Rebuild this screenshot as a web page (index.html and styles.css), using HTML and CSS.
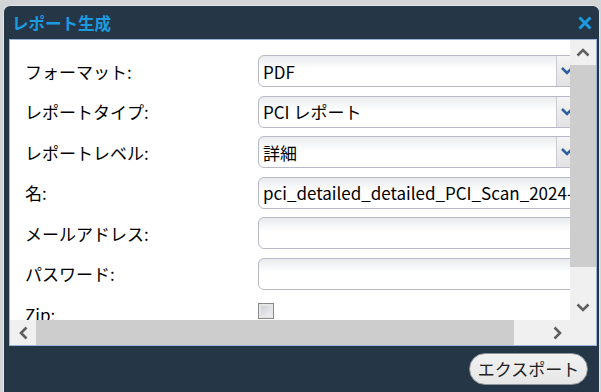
FILE: index.html
```html
<!DOCTYPE html>
<html lang="ja">
<head>
<meta charset="utf-8">
<title>レポート生成</title>
<link rel="stylesheet" href="styles.css">
</head>
<body>
<div class="dialog">
  <div class="titlebar">
    <span class="title">レポート生成</span>
    <svg class="close" width="16" height="16" viewBox="0 0 16 16"><path d="M2.5 2.5 L13.5 13.5 M13.5 2.5 L2.5 13.5" stroke="#1d9be0" stroke-width="3" stroke-linecap="butt"/></svg>
  </div>
  <div class="content">
    <div class="viewport">
      <div class="form">
        <label class="lbl">フォーマット:</label>
        <div class="field select"><span class="val">PDF</span><span class="arrow"><svg width="22" height="12" viewBox="0 0 22 12"><path d="M5 3 L10 8 L15 3" stroke="#2f5f9e" stroke-width="2.6" fill="none"/></svg></span></div>
        <label class="lbl">レポートタイプ:</label>
        <div class="field select"><span class="val">PCI レポート</span><span class="arrow"><svg width="22" height="12" viewBox="0 0 22 12"><path d="M5 3 L10 8 L15 3" stroke="#2f5f9e" stroke-width="2.6" fill="none"/></svg></span></div>
        <label class="lbl">レポートレベル:</label>
        <div class="field select"><span class="val">詳細</span><span class="arrow"><svg width="22" height="12" viewBox="0 0 22 12"><path d="M5 3 L10 8 L15 3" stroke="#2f5f9e" stroke-width="2.6" fill="none"/></svg></span></div>
        <label class="lbl">名:</label>
        <div class="field"><span class="val">pci_detailed_detailed_PCI_Scan_2024-05-21</span></div>
        <label class="lbl">メールアドレス:</label>
        <div class="field"></div>
        <label class="lbl">パスワード:</label>
        <div class="field"></div>
        <label class="lbl">Zip:</label>
        <div class="checkcell"><span class="checkbox"></span></div>
      </div>
    </div>
    <div class="vbar">
      <div class="sbtn"><svg width="14" height="9" viewBox="0 0 14 9"><path d="M1.5 7.5 L7 2 L12.5 7.5" stroke="#5f5f5f" stroke-width="2.6" fill="none"/></svg></div>
      <div class="vthumb"></div>
      <div class="vtrack"></div>
      <div class="sbtn"><svg width="14" height="9" viewBox="0 0 14 9"><path d="M1.5 1.5 L7 7 L12.5 1.5" stroke="#5f5f5f" stroke-width="2.6" fill="none"/></svg></div>
    </div>
    <div class="hbar">
      <div class="sbtn hbtn"><svg width="9" height="14" viewBox="0 0 9 14"><path d="M7.5 1.5 L2 7 L7.5 12.5" stroke="#5f5f5f" stroke-width="2.6" fill="none"/></svg></div>
      <div class="hthumb"></div>
      <div class="htrack"></div>
      <div class="sbtn hbtn"><svg width="9" height="14" viewBox="0 0 9 14"><path d="M1.5 1.5 L7 7 L1.5 12.5" stroke="#5f5f5f" stroke-width="2.6" fill="none"/></svg></div>
    </div>
    <div class="corner"></div>
  </div>
  <div class="footer">
    <button class="export">エクスポート</button>
  </div>
</div>
</body>
</html>
```
FILE: styles.css
```css
html, body {
  margin: 0;
  padding: 0;
  height: 100%;
  overflow: hidden;
}
body {
  background: #d4d5d7;
  font-family: "Noto Sans CJK JP", "Noto Sans", sans-serif;
}
.dialog {
  margin: 5px 1px 0 3px;
  height: 392px;
  box-sizing: border-box;
  background: #253647;
  border: 1px solid #e4e6ea;
  border-bottom: none;
  border-radius: 7px 7px 0 0;
  display: flex;
  flex-direction: column;
}
.titlebar {
  height: 33px;
  display: flex;
  align-items: center;
  justify-content: space-between;
  padding: 0 6px 0 8px;
}
.title {
  color: #1d9be0;
  font-weight: bold;
  font-size: 16.5px;
  line-height: 20px;
}
.close {
  display: block;
}
.content {
  margin: 0 2px 0 5px;
  height: 307px;
  border: 1px solid #9cb7db;
  box-sizing: border-box;
  display: grid;
  grid-template-columns: 1fr 26px;
  grid-template-rows: 1fr 25px;
  background: #f0f0f0;
}
.viewport {
  background: #fff;
  overflow: hidden;
}
.form {
  display: grid;
  grid-template-columns: 233px 322px;
  grid-auto-rows: 32px;
  row-gap: 8.5px;
  padding: 15px 0 0 15px;
  width: 600px;
}
.lbl {
  font-size: 17px;
  color: #000;
  display: flex;
  align-items: center;
  white-space: nowrap;
}
.field {
  border: 1px solid #b7b9c9;
  border-radius: 6px;
  background: linear-gradient(#e9ebee 0, #ffffff 45%, #ffffff 100%);
  box-sizing: border-box;
  display: flex;
  align-items: center;
  overflow: hidden;
}
.val {
  font-size: 17px;
  color: #000;
  padding-left: 4px;
  white-space: nowrap;
  flex: 1;
}
.arrow {
  width: 22px;
  align-self: stretch;
  border-left: 1px solid #c9cad2;
  background: linear-gradient(#f4f4f4, #e2e2e2);
  display: flex;
  align-items: center;
}
.arrow svg {
  display: block;
}
.checkcell {
  display: flex;
  align-items: flex-start;
  padding-top: 5px;
}
.checkbox {
  width: 16px;
  height: 16px;
  box-sizing: border-box;
  border: 1px solid #8a8a8a;
  background: linear-gradient(135deg, #c9ccd2, #f4f5f7);
  box-shadow: inset 0 0 0 2px #e6e6e6;
}
.vbar {
  display: flex;
  flex-direction: column;
  background: #f0f0f0;
}
.sbtn {
  height: 25px;
  flex: none;
  display: flex;
  align-items: center;
  justify-content: center;
  background: #f0f0f0;
}
.sbtn svg {
  display: block;
}
.vthumb {
  height: 202px;
  background: #cdcdcd;
}
.vtrack {
  flex: 1;
}
.hbar {
  display: flex;
  background: #f0f0f0;
}
.hbtn {
  height: auto;
  width: 26px;
}
.hthumb {
  width: 478px;
  background: #cdcdcd;
}
.htrack {
  flex: 1;
}
.corner {
  background: #f0f0f0;
}
.footer {
  flex: 1;
  display: flex;
  justify-content: flex-end;
  align-items: flex-start;
  padding: 7px 11px 0 0;
}
.export {
  height: 32px;
  width: 119px;
  border-radius: 16px;
  border: 1px solid #8e949b;
  background: linear-gradient(#f2f2f2, #e6e6e6);
  font-family: "Noto Sans CJK JP", "Noto Sans", sans-serif;
  font-size: 17px;
  color: #222;
  padding: 0;
  line-height: 30px;
}
```
